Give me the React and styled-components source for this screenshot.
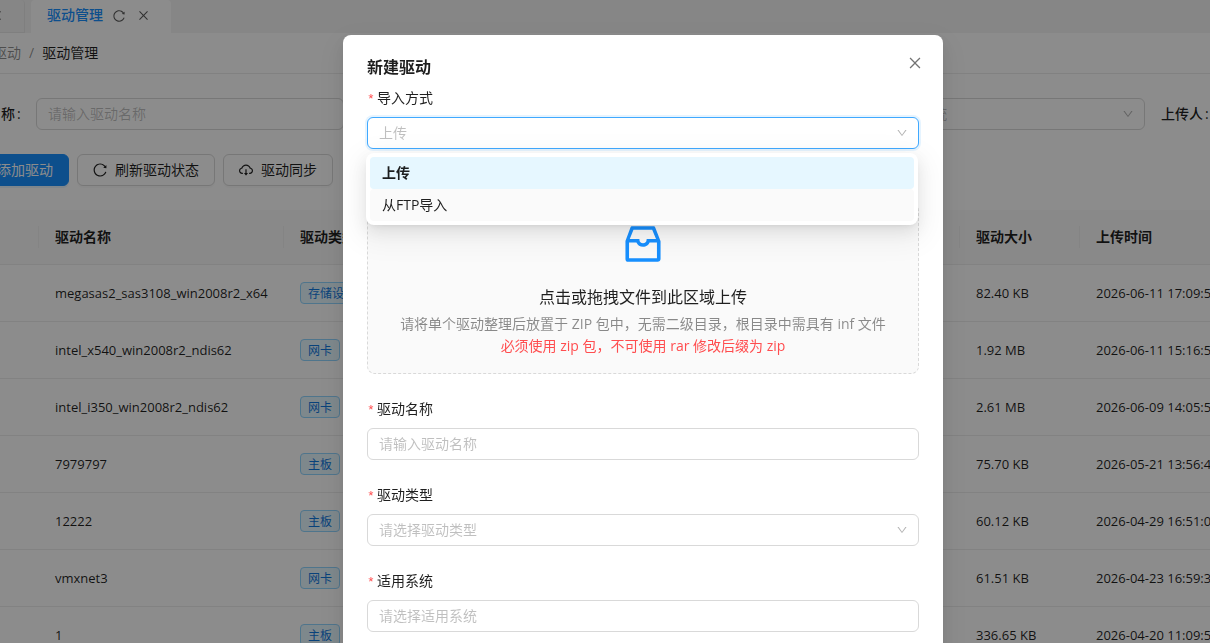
import React from 'react';
import styled, { createGlobalStyle } from 'styled-components';
import {
  AiOutlineReload,
  AiOutlineClose,
  AiOutlinePlus,
  AiOutlineCloudDownload,
  AiOutlineDown,
  AiOutlineInbox,
} from 'react-icons/ai';

const GlobalStyle = createGlobalStyle`
  *, *::before, *::after { box-sizing: border-box; }
  html, body, #root { height: 100%; }
  body {
    margin: 0;
    overflow: hidden;
    background: #fff;
    color: rgba(0, 0, 0, 0.88);
    font-family: "Open Sans", "Noto Sans CJK SC", sans-serif;
    font-size: 14px;
    line-height: 22px;
  }
  button, input, select { font: inherit; color: inherit; }
  svg { display: block; flex: none; }
`;

/* ---------- page behind the dialog ---------- */

const Viewport = styled.div`
  height: 100%;
  overflow: hidden;
`;

const Page = styled.div`
  margin-left: -41px;
`;

const TabBar = styled.nav`
  display: flex;
  gap: 6px;
  height: 33px;
  background: #f5f5f5;
`;

const Tab = styled.div`
  display: flex;
  align-items: center;
  justify-content: flex-end;
  gap: 11px;
  min-width: 66px;
  padding: 0 21px 2px 16px;
  background: ${(p) => (p.$active ? '#fff' : '#f5f5f5')};
  border: solid #e8e8e8;
  border-width: ${(p) => (p.$active ? '0' : '0 1px 1px 0')};
  border-radius: 4px 4px 0 0;
`;

const TabLink = styled.a`
  margin-right: -2px;
  padding-bottom: 2px;
  color: #1890ff;
  font-weight: 500;
  text-decoration: none;
`;

const IconButton = styled.button`
  display: flex;
  padding: 0;
  border: 0;
  background: none;
  color: rgba(0, 0, 0, 0.65);
  font-size: ${(p) => p.$size || 13}px;
`;

const Breadcrumb = styled.nav`
  display: flex;
  align-items: center;
  gap: 8px;
  height: 41px;
  padding-left: 34px;
  border-bottom: 1px solid #ececec;
  color: rgba(0, 0, 0, 0.45);
`;

const Crumb = styled.a`
  color: ${(p) => (p.$current ? 'rgba(0, 0, 0, 0.88)' : 'inherit')};
  text-decoration: none;
`;

const Content = styled.main`
  display: flex;
  flex-direction: column;
  gap: 24px;
  padding-top: 24px;
`;

const SearchRow = styled.form`
  display: grid;
  grid-template-columns: repeat(3, minmax(0, 1fr)) 49px;
  gap: 16px;
`;

const SearchItem = styled.div`
  display: grid;
  grid-template-columns: 77px minmax(0, 1fr);
  > :last-child { grid-column: 2; }
`;

const SearchLabel = styled.label`
  line-height: 32px;
  font-weight: 500;
  white-space: nowrap;
  &::after {
    content: ":";
    margin-left: 2px;
  }
`;

const Toolbar = styled.div`
  display: flex;
  gap: 8px;
`;

const Button = styled.button`
  display: flex;
  align-items: center;
  gap: 7px;
  height: 32px;
  padding: 0 15px 0 14px;
  border: 1px solid ${(p) => (p.$primary ? '#1890ff' : '#d9d9d9')};
  border-radius: 6px;
  background: ${(p) => (p.$primary ? '#1890ff' : '#fff')};
  color: ${(p) => (p.$primary ? '#fff' : 'rgba(0, 0, 0, 0.88)')};
  box-shadow: 0 2px 0 ${(p) => (p.$primary ? 'rgba(5, 145, 255, 0.1)' : 'rgba(0, 0, 0, 0.02)')};
  white-space: nowrap;
  svg { font-size: 16px; }
`;

const Table = styled.table`
  width: 100%;
  table-layout: fixed;
  border-collapse: separate;
  border-spacing: 0;
`;

const HeadCell = styled.th`
  height: 55px;
  padding: 0;
  background: #fafafa;
  border-bottom: 1px solid #ededed;
  font-weight: 600;
  text-align: left;
  white-space: nowrap;
`;

const HeadLabel = styled.div`
  height: 22px;
  padding-left: 16px;
  border-right: ${(p) => (p.$last ? '0' : '1px solid #f0f0f0')};
`;

const Cell = styled.td`
  height: 57px;
  padding: 0 0 0 16px;
  border-bottom: 1px solid #ededed;
  font-size: 13px;
  white-space: nowrap;
`;

const Tag = styled.span`
  display: block;
  width: max-content;
  height: 22px;
  padding: 1px 7px 0;
  border: 1px solid #91d5ff;
  border-radius: 4px;
  background: #e6f7ff;
  color: #1079e0;
  font-size: 12px;
  line-height: 20px;
`;

/* ---------- shared form controls ---------- */

const Input = styled.input`
  width: 100%;
  min-width: 0;
  height: 32px;
  padding: 0 11px 2px;
  border: 1px solid #d9d9d9;
  border-radius: 6px;
  background: #fff;
  outline: none;
  &::placeholder { color: rgba(0, 0, 0, 0.25); opacity: 1; }
`;

const SelectBox = styled.div`
  position: relative;
  width: 100%;
`;

const SelectField = styled.select`
  display: block;
  width: 100%;
  height: 32px;
  padding: 0 32px 0 11px;
  appearance: none;
  border: 1px solid ${(p) => (p.$open ? '#40a9ff' : '#d9d9d9')};
  border-radius: 6px;
  box-shadow: ${(p) => (p.$open ? '0 0 0 2px rgba(5, 145, 255, 0.1)' : 'none')};
  background: #fff;
  color: rgba(0, 0, 0, 0.25);
  outline: none;
`;

const Arrow = styled(AiOutlineDown)`
  position: absolute;
  top: 10px;
  right: 11px;
  font-size: 12px;
  color: rgba(0, 0, 0, 0.3);
  pointer-events: none;
`;

/* ---------- dialog ---------- */

const Mask = styled.div`
  position: fixed;
  inset: 0;
  display: flex;
  justify-content: center;
  align-items: flex-start;
  padding: 35px 0 0 76px;
  background: rgba(0, 0, 0, 0.45);
  overflow: hidden;
`;

const Dialog = styled.section`
  position: relative;
  flex: none;
  width: 600px;
  padding: 20px 24px;
  border-radius: 8px;
  background: #fff;
  box-shadow: 0 6px 16px rgba(0, 0, 0, 0.08), 0 3px 6px -4px rgba(0, 0, 0, 0.12),
    0 9px 28px 8px rgba(0, 0, 0, 0.05);
`;

const DialogTitle = styled.h2`
  margin: 0 0 8px;
  font-size: 16px;
  line-height: 24px;
  font-weight: 600;
`;

const DialogClose = styled.button`
  position: absolute;
  top: 17px;
  right: 17px;
  display: flex;
  align-items: center;
  justify-content: center;
  width: 22px;
  height: 22px;
  padding: 0;
  border: 0;
  background: none;
  color: rgba(0, 0, 0, 0.55);
  font-size: 16px;
`;

const FormItem = styled.div`
  margin-bottom: ${(p) => p.$gap || 24}px;
`;

const FormLabel = styled.label`
  display: flex;
  align-items: center;
  height: 22px;
  margin-bottom: 8px;
  &::before {
    content: "*";
    width: 7px;
    margin-right: 3px;
    padding-top: 3px;
    color: #ff4d4f;
    font-family: "Liberation Mono", monospace;
    font-size: 13px;
  }
`;

const Menu = styled.ul`
  position: absolute;
  z-index: 1;
  top: 36px;
  left: -1px;
  width: 100%;
  margin: 0;
  padding: 4px;
  list-style: none;
  border-radius: 8px;
  background: #fff;
  box-shadow: 0 6px 16px rgba(0, 0, 0, 0.08), 0 3px 6px -4px rgba(0, 0, 0, 0.12),
    0 9px 28px 8px rgba(0, 0, 0, 0.05);
`;

const MenuOption = styled.li`
  padding: 5px 12px;
  border-radius: 4px;
  background: ${(p) => (p.$selected ? '#e6f7ff' : '#fafafa')};
  font-weight: ${(p) => (p.$selected ? 600 : 400)};
`;

const Dragger = styled.div`
  display: flex;
  flex-direction: column;
  align-items: center;
  margin-bottom: 24px;
  padding: 16px;
  border: 1px dashed #d9d9d9;
  border-radius: 8px;
  background: #fafafa;
  text-align: center;
`;

const InboxIcon = styled(AiOutlineInbox)`
  margin-bottom: 17px;
  color: #1890ff;
  font-size: 48px;
`;

const DraggerTitle = styled.p`
  margin: 0 0 4px;
  font-size: 16px;
  line-height: 24px;
`;

const DraggerHint = styled.p`
  margin: 0;
  color: ${(p) => (p.$danger ? '#ff4d4f' : 'rgba(0, 0, 0, 0.45)')};
`;

const drivers = [
  ['megasas2_sas3108_win2008r2_x64', '存储设备', '82.40 KB', '2026-06-11 17:09:52'],
  ['intel_x540_win2008r2_ndis62', '网卡', '1.92 MB', '2026-06-11 15:16:53'],
  ['intel_i350_win2008r2_ndis62', '网卡', '2.61 MB', '2026-06-09 14:05:56'],
  ['7979797', '主板', '75.70 KB', '2026-05-21 13:56:42'],
  ['12222', '主板', '60.12 KB', '2026-04-29 16:51:03'],
  ['vmxnet3', '网卡', '61.51 KB', '2026-04-23 16:59:38'],
  ['1', '主板', '336.65 KB', '2026-04-20 11:09:52'],
];

function Select({ id, text, label, open, children }) {
  return (
    <SelectBox>
      <SelectField id={id} aria-label={label} $open={open} defaultValue="">
        <option value="">{text}</option>
      </SelectField>
      <Arrow />
      {children}
    </SelectBox>
  );
}

function DriverTable() {
  return (
    <Table>
      <colgroup>
        <col style={{ width: 80 }} />
        <col style={{ width: 245 }} />
        <col />
        <col style={{ width: 120 }} />
        <col style={{ width: 130 }} />
      </colgroup>
      <thead>
        <tr>
          {['', '驱动名称', '驱动类型', '驱动大小', '上传时间'].map((name, i) => (
            <HeadCell key={i}>
              <HeadLabel $last={i === 4}>{name}</HeadLabel>
            </HeadCell>
          ))}
        </tr>
      </thead>
      <tbody>
        {drivers.map(([name, type, size, time]) => (
          <tr key={name}>
            <Cell />
            <Cell>{name}</Cell>
            <Cell><Tag>{type}</Tag></Cell>
            <Cell>{size}</Cell>
            <Cell>{time}</Cell>
          </tr>
        ))}
      </tbody>
    </Table>
  );
}

function DriverPage() {
  return (
    <Page>
      <TabBar>
        <Tab>
          <IconButton aria-label="关闭"><AiOutlineClose /></IconButton>
        </Tab>
        <Tab $active>
          <TabLink href="#drivers">驱动管理</TabLink>
          <IconButton $size={14} aria-label="刷新"><AiOutlineReload /></IconButton>
          <IconButton aria-label="关闭"><AiOutlineClose /></IconButton>
        </Tab>
      </TabBar>
      <Breadcrumb>
        <Crumb href="#driver">驱动</Crumb>
        <span>/</span>
        <Crumb href="#drivers" $current>驱动管理</Crumb>
      </Breadcrumb>
      <Content>
        <SearchRow>
          <SearchItem>
            <SearchLabel htmlFor="q-name">驱动名称</SearchLabel>
            <Input id="q-name" placeholder="请输入驱动名称" />
          </SearchItem>
          <SearchItem>
            <Select id="q-type" label="驱动类型" />
          </SearchItem>
          <SearchItem>
            <Select id="q-system" label="适用系统" text="请选择适用系统" />
          </SearchItem>
          <SearchLabel as="span">上传人</SearchLabel>
        </SearchRow>
        <Toolbar>
          <Button $primary><AiOutlinePlus />添加驱动</Button>
          <Button><AiOutlineReload />刷新驱动状态</Button>
          <Button><AiOutlineCloudDownload />驱动同步</Button>
        </Toolbar>
        <DriverTable />
      </Content>
    </Page>
  );
}

function CreateDialog() {
  return (
    <Mask>
      <Dialog role="dialog" aria-labelledby="dialog-title">
        <DialogTitle id="dialog-title">新建驱动</DialogTitle>
        <DialogClose aria-label="关闭"><AiOutlineClose /></DialogClose>
        <FormItem $gap={54}>
          <FormLabel htmlFor="mode">导入方式</FormLabel>
          <Select id="mode" text="上传" open>
            <Menu role="listbox">
              <MenuOption role="option" aria-selected="true" $selected>上传</MenuOption>
              <MenuOption role="option" aria-selected="false">从FTP导入</MenuOption>
            </Menu>
          </Select>
        </FormItem>
        <Dragger>
          <InboxIcon />
          <DraggerTitle>点击或拖拽文件到此区域上传</DraggerTitle>
          <DraggerHint>请将单个驱动整理后放置于 ZIP 包中，无需二级目录，根目录中需具有 inf 文件</DraggerHint>
          <DraggerHint $danger>必须使用 zip 包，不可使用 rar 修改后缀为 zip</DraggerHint>
        </Dragger>
        <FormItem>
          <FormLabel htmlFor="name">驱动名称</FormLabel>
          <Input id="name" placeholder="请输入驱动名称" />
        </FormItem>
        <FormItem>
          <FormLabel htmlFor="type">驱动类型</FormLabel>
          <Select id="type" text="请选择驱动类型" />
        </FormItem>
        <FormItem>
          <FormLabel htmlFor="system">适用系统</FormLabel>
          <Input id="system" placeholder="请选择适用系统" />
        </FormItem>
      </Dialog>
    </Mask>
  );
}

export default function App() {
  return (
    <>
      <GlobalStyle />
      <Viewport>
        <DriverPage />
      </Viewport>
      <CreateDialog />
    </>
  );
}
